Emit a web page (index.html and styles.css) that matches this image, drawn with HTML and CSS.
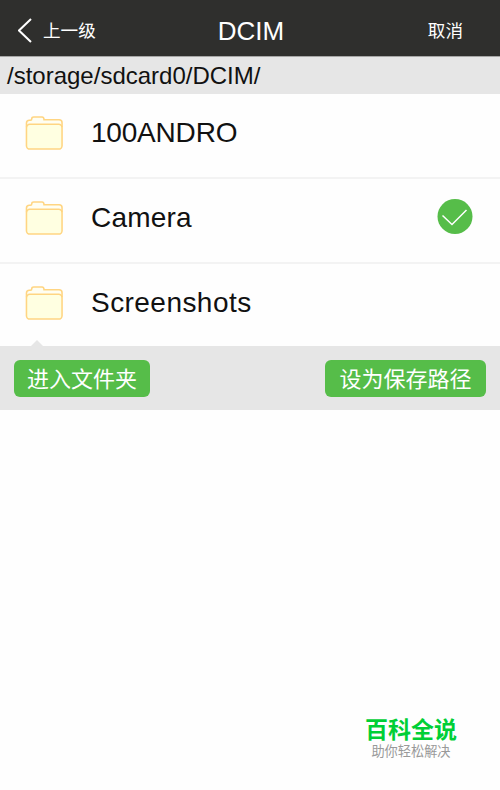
FILE: index.html
```html
<!DOCTYPE html>
<html lang="zh-CN">
<head>
    <meta charset="UTF-8">
    <meta name="viewport" content="width=device-width, initial-scale=1.0">
    <title>DCIM</title>
    <link rel="stylesheet" href="styles.css">
</head>
<body>
    <svg class="defs" width="0" height="0">
        <symbol id="folder" viewBox="0 0 40 36">
            <path d="M2 10V7.500Q2 4.500 5 4.500H6.500Q7 1.500 9 1.500H17.500Q19.500 1.500 19.500 4.500H35Q38 4.500 38 7.500V10" fill="#fffef2" stroke="none"/>
            <rect x="1.500" y="9" width="36.500" height="25.500" rx="3.500" fill="#ffffe1"/>
            <path d="M1.500 12V8Q1.500 5 4.500 5H5.500Q7 4.800 7 3Q7 1.500 9 1.500H17.500Q19.500 1.500 19.500 4.500H35Q38 4.500 38 7.500V12"/>
        </symbol>
    </svg>

    <header class="header">
        <button class="back">
            <svg class="arrow" viewBox="0 0 14 26"><path d="M13 1L1 12.500L13 24"/></svg>
            <span>上一级</span>
        </button>
        <h1>DCIM</h1>
        <button class="cancel">取消</button>
    </header>
    <div class="path">/storage/sdcard0/DCIM/</div>

    <ul class="list">
        <li class="row">
            <svg class="folder"><use href="#folder"/></svg>
            <span class="name tight">100ANDRO</span>
        </li>
        <li class="row">
            <svg class="folder"><use href="#folder"/></svg>
            <span class="name">Camera</span>
            <svg class="check" viewBox="0 0 36 36">
                <circle cx="18" cy="17.500" r="17.500"/>
                <path d="M5.500 16.500L15 25.500L29.500 11"/>
            </svg>
        </li>
        <li class="row">
            <svg class="folder"><use href="#folder"/></svg>
            <span class="name wide">Screenshots</span>
        </li>
    </ul>

    <div class="actions">
        <button class="btn enter">进入文件夹</button>
        <button class="btn save">设为保存路径</button>
    </div>

    <footer class="brand">
        <div class="brand-name">百科全说</div>
        <div class="brand-sub">助你轻松解决</div>
    </footer>
</body>
</html>
```

FILE: styles.css
```css
* {
    box-sizing: border-box;
    margin: 0;
    padding: 0;
}

body {
    font-family: "Liberation Sans", "Noto Sans CJK SC", sans-serif;
    display: flex;
    flex-direction: column;
    height: 790px;
    background-color: #fefefe;
    color: #111;
    overflow: hidden;
}

button {
    border: none;
    background: none;
    color: #fff;
    font-family: inherit;
    cursor: pointer;
}

.defs {
    display: none;
}

.header {
    display: grid;
    grid-template-columns: 1fr auto 1fr;
    align-items: center;
    height: 57px;
    padding: 6px 37px 0 18px;
    background-color: #2f2f2d;
    border-bottom: 1px solid #a6a6a5;
    color: #fff;
}

.header h1 {
    font-size: 26px;
    font-weight: normal;
    line-height: 30px;
    padding-left: 21px;
}

.back {
    display: flex;
    align-items: center;
    gap: 11px;
    font-size: 17.600px;
    line-height: 26px;
}

.arrow {
    width: 14px;
    height: 26px;
    fill: none;
    stroke: #fff;
    stroke-width: 2;
}

.cancel {
    justify-self: end;
    font-size: 17.600px;
    line-height: 26px;
}

.path {
    height: 37px;
    padding-left: 7px;
    background-color: #e6e6e6;
    font-size: 24px;
    line-height: 37px;
}

.list {
    list-style: none;
}

.row {
    display: flex;
    align-items: center;
    height: 85px;
    padding: 0 27px 6px 25px;
    border-bottom: 2px solid #f3f3f3;
}

.row:last-child {
    height: 82px;
    padding-bottom: 4px;
    border-bottom: none;
}

.folder {
    width: 39px;
    height: 36px;
    fill: none;
    stroke: #ffd582;
    stroke-width: 1.600;
}

.name {
    margin-left: 27px;
    font-size: 28px;
    line-height: 36px;
    letter-spacing: 0.2px;
}

.name.tight {
    letter-spacing: -0.2px;
}

.name.wide {
    letter-spacing: 0.45px;
}

.check {
    width: 36px;
    height: 36px;
    margin: -2px 0 0 auto;
}

.check circle {
    fill: #56bd49;
}

.check path {
    fill: none;
    stroke: #fff;
    stroke-width: 1.500;
}

.actions {
    position: relative;
    display: flex;
    justify-content: space-between;
    height: 64px;
    padding: 14px 14px 0;
    background-color: #e6e6e6;
}

/* pointer to the folder list */
.actions::before {
    content: "";
    position: absolute;
    left: 31px;
    top: -6px;
    border: 6px solid transparent;
    border-top: none;
    border-bottom-color: #e6e6e6;
}

.btn {
    height: 37px;
    padding-top: 2px;
    border-radius: 6px;
    background-color: #56bd49;
    font-size: 22px;
    line-height: 35px;
}

.enter {
    width: 136px;
}

.save {
    width: 161px;
}

.brand {
    width: 92px;
    margin: auto 43px 29px auto;
    text-align: center;
    white-space: nowrap;
}

.brand-name {
    color: #00cf36;
    font-size: 23px;
    font-weight: bold;
    line-height: 26px;
}

.brand-sub {
    color: #999;
    font-size: 13.200px;
    line-height: 18px;
}
```
